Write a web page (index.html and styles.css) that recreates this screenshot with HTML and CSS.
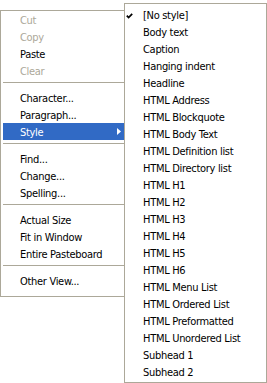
FILE: index.html
```html
<!DOCTYPE html>
<html lang="en">
  <head>
    <meta charset="utf-8" />
    <title>Style menu</title>
    <link rel="stylesheet" href="styles.css">
  </head>
  <body>
    <div class="desk">
      <ul class="menu menu--main">
        <li class="menu__item menu__item--disabled">Cut</li>
        <li class="menu__item menu__item--disabled">Copy</li>
        <li class="menu__item">Paste</li>
        <li class="menu__item menu__item--disabled">Clear</li>
        <li class="menu__sep"></li>
        <li class="menu__item">Character...</li>
        <li class="menu__item">Paragraph...</li>
        <li class="menu__item menu__item--active">
          Style
          <svg class="menu__arrow" width="4" height="7" viewBox="0 0 4 7"><polygon points="0,0 4,3.5 0,7" fill="#fff"/></svg>
        </li>
        <li class="menu__sep"></li>
        <li class="menu__item">Find...</li>
        <li class="menu__item">Change...</li>
        <li class="menu__item">Spelling...</li>
        <li class="menu__sep"></li>
        <li class="menu__item">Actual Size</li>
        <li class="menu__item">Fit in Window</li>
        <li class="menu__item">Entire Pasteboard</li>
        <li class="menu__sep"></li>
        <li class="menu__item">Other View...</li>
      </ul>

      <ul class="menu menu--sub">
        <li class="menu__item">
          <svg class="menu__check" width="7" height="6" viewBox="0 0 7 6"><polyline points="0.8,2.6 2.6,4.6 6.2,0.8" fill="none" stroke="#000" stroke-width="1.7"/></svg>
          [No style]
        </li>
        <li class="menu__item">Body text</li>
        <li class="menu__item">Caption</li>
        <li class="menu__item">Hanging indent</li>
        <li class="menu__item">Headline</li>
        <li class="menu__item">HTML Address</li>
        <li class="menu__item">HTML Blockquote</li>
        <li class="menu__item">HTML Body Text</li>
        <li class="menu__item">HTML Definition list</li>
        <li class="menu__item">HTML Directory list</li>
        <li class="menu__item">HTML H1</li>
        <li class="menu__item">HTML H2</li>
        <li class="menu__item">HTML H3</li>
        <li class="menu__item">HTML H4</li>
        <li class="menu__item">HTML H5</li>
        <li class="menu__item">HTML H6</li>
        <li class="menu__item">HTML Menu List</li>
        <li class="menu__item">HTML Ordered List</li>
        <li class="menu__item">HTML Preformatted</li>
        <li class="menu__item">HTML Unordered List</li>
        <li class="menu__item">Subhead 1</li>
        <li class="menu__item">Subhead 2</li>
      </ul>
    </div>
  </body>
</html>
```

FILE: styles.css
```css
body {
  margin: 0;
  background: #fff;
  color: #000;
  font-family: "DejaVu Sans", "Liberation Sans", sans-serif;
  font-stretch: condensed;
  font-size: 11px;
  letter-spacing: -0.3px;
}

.desk {
  display: flex;
  align-items: flex-start;
  padding-top: 3px;
}

.menu {
  list-style: none;
  margin: 0;
  padding: 0;
  background: #fff;
  border: 1px solid #aca899;
  box-sizing: border-box;
}

.menu--main {
  width: 125px;
  margin-top: 7px;
  padding-bottom: 7px;
}

.menu--sub {
  width: 143px;
  margin-left: -1px;
  padding: 2px 0;
}

.menu__item {
  position: relative;
  height: 16px;
  padding-top: 1px;
  line-height: 17px;
  margin-left: 2px;
  padding-left: 17px;
  white-space: nowrap;
}

.menu--sub .menu__item {
  padding-left: 16px;
}

.menu__item--disabled {
  color: #aca899;
}

.menu__item--active {
  background: #316ac5;
  color: #fff;
}

.menu__arrow {
  position: absolute;
  right: 3px;
  top: 5px;
}

.menu__check {
  position: absolute;
  left: -1px;
  top: 7px;
}

.menu__sep {
  height: 0;
  margin: 3px 0 6px 2px;
  border-top: 1px solid #aca899;
}
```
